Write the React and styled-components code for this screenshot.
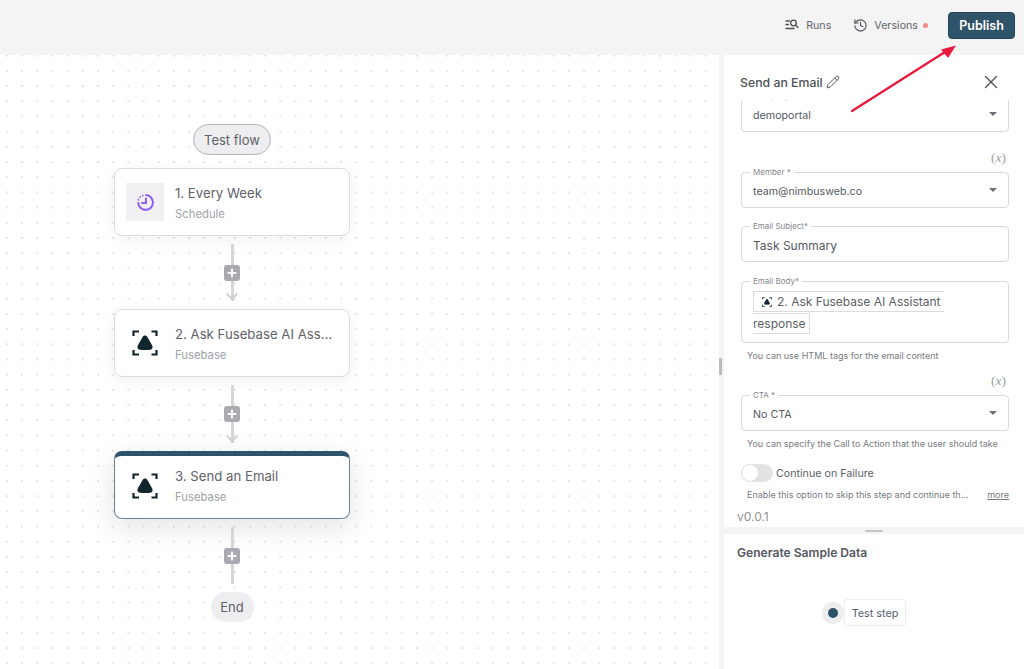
import React from "react";
import styled, { createGlobalStyle } from "styled-components";
import { History, Pencil, X } from "lucide-react";

const Global = createGlobalStyle`
  html, body { margin: 0; padding: 0; background: #fff; }
  * { box-sizing: border-box; }
  body { font-family: Inter, "Liberation Sans", sans-serif; color: #5b5f66; }
`;

const Page = styled.div`
  position: relative; width: 1024px; height: 669px; overflow: hidden;
  display: flex; flex-direction: column; background: #fff;
`;
const TopBar = styled.header`
  height: 55px; flex: none; background: #f4f4f4;
  display: flex; align-items: center; justify-content: flex-end;
  padding: 0 9px 5px 0;
`;
const TopLink = styled.div`
  display: flex; align-items: center; gap: ${p => p.$gap}px; font-size: 10.7px; color: #62666d;
  margin-right: ${p => p.$mr}px;
  svg { color: #4a4e55; }
`;
const Dot = styled.span`
  width: 5px; height: 5px; border-radius: 50%; background: #f28b8b; margin-left: -1px;
`;
const Publish = styled.button`
  width: 67px; height: 27px; border: 1px solid #24465a; border-radius: 4px; background: #2f5368;
  color: #fff; font: 600 12.5px Inter, sans-serif; padding: 0;
`;
const Main = styled.div`flex: 1; display: flex; min-height: 0;`;
const Canvas = styled.main`
  width: 719px; flex: none; padding: 69px 0 0 114px;
  background-color: #fff;
  background-image: radial-gradient(circle, #e4e4e6 0.8px, transparent 1.1px);
  background-size: 15.2px 15.2px;
  background-position: -0.7px -6.9px;
`;
const Flow = styled.div`width: 236px; display: flex; flex-direction: column; align-items: center;`;
const Pill = styled.div`
  display: flex; align-items: center; justify-content: center;
  width: ${p => p.$w}px; height: ${p => p.$h}px; border-radius: 16px; font-size: 13px; color: #5d6168;
  background: #eeeef0; border: ${p => (p.$outlined ? "1px solid #b5b6ba" : "none")};
  margin-bottom: ${p => p.$mb || 0}px;
`;
const Card = styled.div`
  width: 236px; height: 68px; flex: none; background: #fff; border-radius: 8px;
  display: flex; align-items: center; gap: 11px; padding: 0 16px 0 11px;
  border: 1px solid ${p => (p.$active ? "#6f8090" : "#dcdcdf")};
  border-top: ${p => (p.$active ? "5px solid #2f5368" : "1px solid #dcdcdf")};
  box-shadow: ${p => (p.$active ? "0 8px 28px rgba(30,40,50,.13)" : "0 4px 18px rgba(30,40,50,.06)")};
  position: relative;
  ${p => p.$active && "padding-bottom: 2px;"}
`;
const IconBox = styled.div`
  width: 38px; height: 38px; flex: none; display: flex; align-items: center; justify-content: center;
  background: ${p => (p.$tint ? "#f1f1f4" : "transparent")};
`;
const CardText = styled.div`min-width: 0; flex: 1; display: flex; flex-direction: column; gap: 4px;`;
const CardTitle = styled.div`
  font-size: 13.2px; line-height: 19px; color: #5f6269; white-space: nowrap; overflow: hidden; text-overflow: ellipsis;
`;
const CardSub = styled.div`font-size: 11.3px; line-height: 14px; color: #a0a3aa;`;
const Connector = styled.div`
  position: relative; width: 100%; height: 73.4px; flex: none;
  display: flex; justify-content: center;
  padding: 8px 0;
`;
const Line = styled.div`width: 3px; height: 100%; background: #d6d6d9; position: relative;`;
const ArrowTip = styled.svg`position: absolute; left: 50%; bottom: 8px; transform: translateX(-50%);`;
const PlusBadge = styled.div`
  position: absolute; left: 50%; top: 29px; transform: translateX(-50%);
  width: 16px; height: 16px; border-radius: 3px; background: #a9aab0;
  color: #fff; display: flex; align-items: center; justify-content: center;
`;
const Resizer = styled.div`
  width: 5px; flex: none; background: #f4f4f4; display: flex; align-items: center; justify-content: flex-start;
  padding-top: 8px;
`;
const Grip = styled.div`width: 3px; height: 17px; background: #bcbcc0; border-radius: 1px;`;
const Panel = styled.aside`flex: 1; min-width: 0; display: flex; flex-direction: column; background: #fff;`;
const PanelHead = styled.div`
  height: 45px; flex: none; display: flex; align-items: center; padding: 9px 22px 0 16px;
  font-size: 12.3px; font-weight: 500; color: #4f535a;
  svg { color: #4f535a; }
`;
const HeadTitle = styled.span`flex: 1; display: flex; align-items: center; gap: 3px;`;
const Scroller = styled.div`
  height: 427px; flex: none; overflow: hidden; padding: 0 15px 0 17px;
  display: flex; flex-direction: column;
`;
const Box = styled.div`
  position: relative; flex: none; height: ${p => p.$h || 36}px; margin-top: ${p => p.$mt || 0}px;
  border: 1px solid #d9d9dc; border-radius: 4px; padding: 3px 11px 0;
  display: flex; align-items: center; justify-content: space-between;
  font-size: ${p => p.$fs || 10.7}px; color: #55595f;
`;
const Legend = styled.span`
  position: absolute; left: 8px; top: -6px; background: #fff; padding: 0 3px;
  font-size: 8px; line-height: 11px; color: #84878d;
`;
const Caret = styled.span`
  width: 0; height: 0; border-left: 4px solid transparent; border-right: 4px solid transparent;
  border-top: 4.5px solid #6b6e74; margin-top: -3px;
`;
const VarRow = styled.div`
  height: ${p => p.$h}px; flex: none; display: flex; justify-content: flex-end; align-items: flex-end;
  padding: 0 3px 7px 0; font: 13.5px/14px "Liberation Serif", serif; color: #9a9da3;
  em { font-style: italic; }
`;
const Help = styled.div`
  height: 24px; flex: none; display: flex; align-items: center; justify-content: space-between;
  padding-left: 6px; font-size: 9px; color: #777a80; white-space: nowrap;
`;
const More = styled.span`text-decoration: underline; color: #777a80;`;
const BodyBox = styled(Box)`display: block; padding: 9px 11px 0 11px; font-size: 12px; line-height: 22px;`;
const Chip = styled.span`
  border: 1px solid #dcdcdf; padding: 2px 3px 2px 8px; color: #5b5f66;
  box-decoration-break: slice; -webkit-box-decoration-break: slice;
  svg { vertical-align: -1px; margin-right: 5px; }
`;
const ToggleRow = styled.div`
  flex: none; margin-top: 9px; height: 18px; display: flex; align-items: center; gap: 3px;
  font-size: 10.7px; color: #5b5f66;
`;
const Toggle = styled.span`
  position: relative; width: 32px; height: 18px; border-radius: 9px; background: #e2e2e4; display: block;
`;
const Knob = styled.span`
  position: absolute; left: 0; top: 0; width: 18px; height: 18px; border-radius: 50%;
  background: #fff; border: 1px solid #e2e2e4;
`;
const Version = styled.div`
  flex: none; height: 20px; margin-left: -4px; display: flex; align-items: center; font-size: 12px; color: #8f9298;
`;
const Divider = styled.div`
  height: 7px; flex: none; background: #f4f4f4; display: flex; justify-content: center; align-items: center;
`;
const Handle = styled.div`width: 18px; height: 2px; background: #c6c6c9; border-radius: 1px;`;
const Bottom = styled.section`flex: 1; padding: 11px 13px 0; display: flex; flex-direction: column;`;
const BottomTitle = styled.div`font-size: 12.1px; line-height: 16px; font-weight: 600; color: #54585f;`;
const TestRow = styled.div`display: flex; align-items: center; justify-content: center; margin-top: 38px; padding-right: 20px;`;
const Radio = styled.span`
  width: 22px; height: 22px; border-radius: 50%; background: #eeeef0; display: flex; align-items: center; justify-content: center;
  &::after { content: ""; width: 10px; height: 10px; border-radius: 50%; background: #2f5368; }
`;
const TestBtn = styled.div`
  width: 62px; height: 27px; border: 1px solid #eeeef0; border-radius: 3px; background: #fff; padding-top: 2px;
  display: flex; align-items: center; justify-content: center; font-size: 10.8px; color: #55616c;
`;
const Annotation = styled.svg`position: absolute; left: 0; top: 0; pointer-events: none;`;

const FuseLogo = ({ size = 26 }) => (
  <svg width={size} height={size} viewBox="0 0 26 26" fill="none">
    <g stroke="#10252e" strokeWidth="2.2" fill="none">
      <path d="M7 1.500H1.500V6" />
      <path d="M19.500 1.500h5V6" />
      <path d="M1.500 20v4.500H7" />
      <path d="M24.500 20v4.500h-5" />
    </g>
    <path d="M13 5.500c1 0 1.800.5 2.400 1.500l4.800 8.500c1 1.800.2 4-2 4.200-3.200.3-7.200.3-10.400 0-2.200-.2-3-2.400-2-4.200l4.800-8.500C11.200 6 12 5.500 13 5.500z" fill="#10252e" />
  </svg>
);

const ClockIcon = () => (
  <svg width="19" height="19" viewBox="0 0 18 18" fill="none" stroke="#8b5cf6" strokeWidth="1.9" strokeLinecap="round">
    <path d="M9.500 2a7 7 0 1 1-7.400 7.500" />
    <path d="M9.400 5.300V9.500H5.800" />
    <path d="M2.300 6.400h.01M4 3.900h.01M6.400 2.400h.01" strokeWidth="1.700" />
  </svg>
);

const RunsIcon = () => (
  <svg width="14" height="12" viewBox="0 0 14 12" fill="none" stroke="currentColor" strokeWidth="1.300" strokeLinecap="round">
    <path d="M1 2h3.500M1 5.500h2.500M1 9.500h8" />
    <circle cx="8.500" cy="4" r="2.800" />
    <path d="M10.600 6.200 13 8.500" />
  </svg>
);

const Plus = () => (
  <svg width="10" height="10" viewBox="0 0 10 10" stroke="currentColor" strokeWidth="2" strokeLinecap="round">
    <path d="M5 1.500v7M1.500 5h7" />
  </svg>
);

const Link = ({ arrow }) => (
  <Connector>
    <Line />
    {arrow && (
      <ArrowTip width="14" height="9" viewBox="0 0 14 9" fill="none" stroke="#d0d0d3" strokeWidth="1.800">
        <path d="M1.500 1.500 7 7l5.500-5.500" />
      </ArrowTip>
    )}
    <PlusBadge><Plus /></PlusBadge>
  </Connector>
);

const Step = ({ icon, title, sub, active, tint }) => (
  <Card $active={active}>
    <IconBox $tint={tint}>{icon}</IconBox>
    <CardText>
      <CardTitle>{title}</CardTitle>
      <CardSub>{sub}</CardSub>
    </CardText>
  </Card>
);

export default function App() {
  return (
    <Page>
      <Global />
      <TopBar>
        <TopLink $gap={7} $mr={22}><RunsIcon />Runs</TopLink>
        <TopLink $gap={6} $mr={20}><History size={15} strokeWidth={1.7} />Versions<Dot /></TopLink>
        <Publish>Publish</Publish>
      </TopBar>
      <Main>
        <Canvas>
          <Flow>
            <Pill $w={78} $h={31} $outlined $mb={13}>Test flow</Pill>
            <Step tint icon={<ClockIcon />} title="1. Every Week" sub="Schedule" />
            <Link arrow />
            <Step icon={<FuseLogo />} title="2. Ask Fusebase AI Assistant" sub="Fusebase" />
            <Link arrow />
            <Step active icon={<FuseLogo />} title="3. Send an Email" sub="Fusebase" />
            <Link />
            <Pill $w={43} $h={30}>End</Pill>
          </Flow>
        </Canvas>
        <Resizer><Grip /></Resizer>
        <Panel>
          <PanelHead>
            <HeadTitle>Send an Email <Pencil size={14} strokeWidth={1.7} /></HeadTitle>
            <X size={22} strokeWidth={1.5} />
          </PanelHead>
          <Scroller>
            <Box $mt={-4}><Legend>Company *</Legend>demoportal<Caret /></Box>
            <VarRow $h={40}>(<em>x</em>)</VarRow>
            <Box><Legend>Member *</Legend>team@nimbusweb.co<Caret /></Box>
            <Box $mt={18} $fs={12}><Legend>Email Subject*</Legend>Task Summary</Box>
            <BodyBox $mt={19} $h={62}>
              <Legend>Email Body*</Legend>
              <Chip><FuseLogo size={10} />2. Ask Fusebase AI Assistant&nbsp;<br />response</Chip>
            </BodyBox>
            <Help>You can use HTML tags for the email content</Help>
            <VarRow $h={28}>(<em>x</em>)</VarRow>
            <Box><Legend>CTA *</Legend>No CTA<Caret /></Box>
            <Help>You can specify the Call to Action that the user should take</Help>
            <ToggleRow><Toggle><Knob /></Toggle>Continue on Failure</ToggleRow>
            <Help><span>Enable this option to skip this step and continue th...</span><More>more</More></Help>
            <Version>v0.0.1</Version>
          </Scroller>
          <Divider><Handle /></Divider>
          <Bottom>
            <BottomTitle>Generate Sample Data</BottomTitle>
            <TestRow><Radio /><TestBtn>Test step</TestBtn></TestRow>
          </Bottom>
        </Panel>
      </Main>
      <Annotation width="1024" height="669" viewBox="0 0 1024 669" fill="none">
        <path d="M852 111 945 52" stroke="#e8193c" strokeWidth="2.300" strokeLinecap="round" />
        <path d="M956 45.500 941 49.500 948 58z" fill="#e8193c" />
      </Annotation>
    </Page>
  );
}
